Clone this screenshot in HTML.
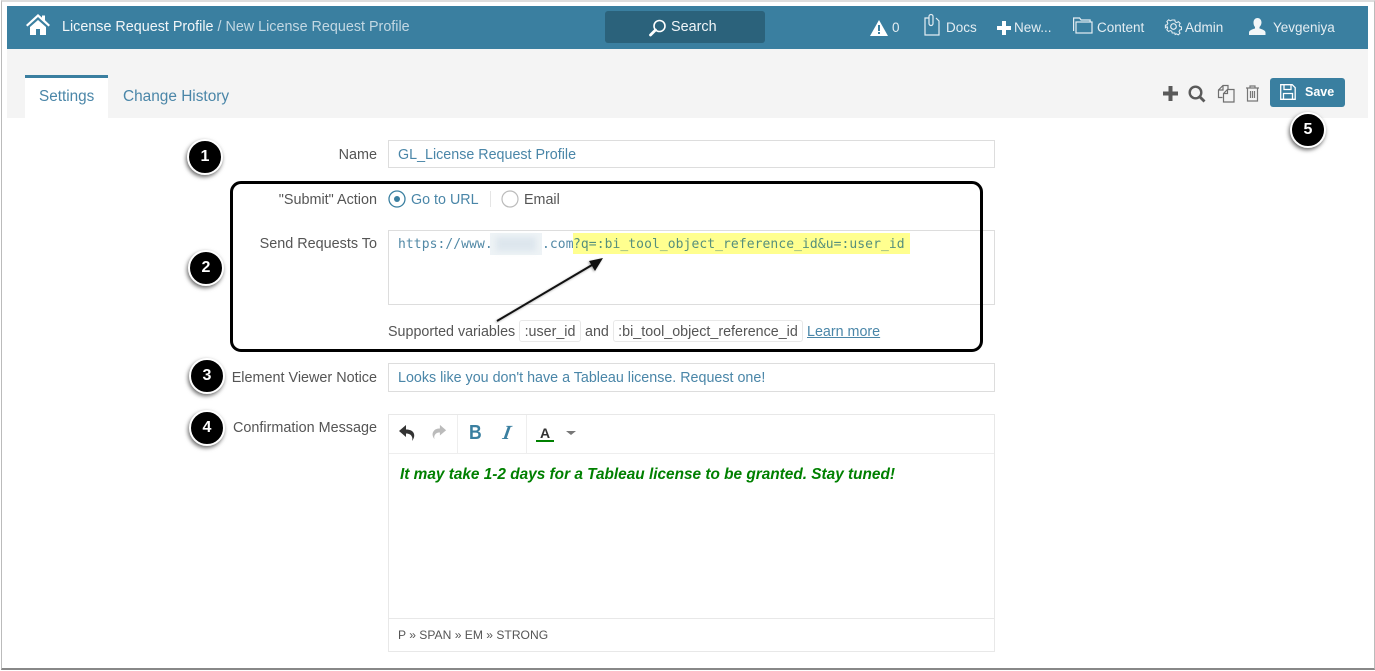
<!DOCTYPE html>
<html><head><meta charset="utf-8"><style>
html,body{margin:0;padding:0;background:#fff}
body{width:1375px;height:671px;position:relative;overflow:hidden;font-family:"Liberation Sans",sans-serif;font-size:14.3px;color:#555}
.a{position:absolute;white-space:nowrap}
.l{position:absolute;right:998px;white-space:nowrap;color:#555;font-size:14.4px;line-height:18px}
.box{position:absolute;left:388px;width:605px;border:1px solid #ddd;background:#fff;box-sizing:content-box}
.t{position:absolute;white-space:nowrap;color:#4a86a8;font-size:14.3px;line-height:18px}
.code{position:absolute;height:22px;line-height:20px;padding-top:1px;border:1px solid #e8e8e8;border-radius:3px;text-align:center;box-sizing:border-box;color:#555;font-size:14.3px;white-space:nowrap}
.c{position:absolute;width:32px;height:32px;border-radius:50%;background:#000;border:2px solid #fff;box-sizing:content-box;box-shadow:-1px 2px 4px rgba(0,0,0,.6);color:#fff;font-weight:bold;font-size:16px;line-height:32px;text-align:center}
.h{position:absolute;white-space:nowrap;font-size:13.5px;color:#e4edf2;line-height:18px;top:19px}
svg{position:absolute;overflow:visible}
</style></head><body>
<div class="a" style="left:1px;top:0;width:1372px;height:666px;border:1px solid #bbb;border-top:2px solid #ddd;border-bottom:2px solid #888;box-sizing:content-box"></div>
<div class="a" style="left:7px;top:6px;width:1361px;height:43px;background:#3a7fa0"></div>
<div class="a" style="left:7px;top:49px;width:1361px;height:69px;background:#f4f4f4"></div>
<svg style="left:26px;top:14px" width="24" height="21" viewBox="0 0 24 21"><path d="M0 11L12 0l4 3.6V1.500h3v4.800L24 11l-1.500 1.500L12 3 1.500 12.500zM4 13l8-7 8 7v8h-6v-6h-4v6H4z" fill="#fff"/></svg>
<div class="a" style="left:62px;top:18px;font-size:14.35px;line-height:18px;color:#f2f6f8">License Request Profile <span style="color:#c3d8e3">/ New License Request Profile</span></div>
<div class="a" style="left:605px;top:11px;width:160px;height:32px;background:#2b627b;border-radius:3px"></div>
<svg style="left:649px;top:19px" width="18" height="18" viewBox="0 0 18 18"><circle cx="10.500" cy="7" r="5.500" fill="none" stroke="#fff" stroke-width="1.600"/><path d="M6.500 11L1.500 16" stroke="#fff" stroke-width="2.800" stroke-linecap="round"/></svg>
<div class="a" style="left:671px;top:18px;font-size:14.4px;line-height:18px;color:#f0f5f8">Search</div>
<svg style="left:870px;top:20px" width="18" height="16" viewBox="0 0 18 16"><path d="M9 0L18 16H0z" fill="#fff"/><rect x="8" y="5" width="2" height="6" fill="#3a7fa0"/><rect x="8" y="12" width="2" height="2" fill="#3a7fa0"/></svg>
<div class="h" style="left:892px">0</div>
<svg style="left:924px;top:15px" width="16" height="21" viewBox="0 0 16 21" fill="none" stroke="#e4edf2" stroke-width="1.200"><path d="M5 3H1v17h14V6l-3-3"/><path d="M5 1.500v7a2 2 0 0 0 4 0V1.500a1.500 1.500 0 0 0-4 0" /></svg>
<div class="h" style="left:946px">Docs</div>
<svg style="left:997px;top:21px" width="14" height="14" viewBox="0 0 14 14"><path d="M5 0h4v5h5v4H9v5H5V9H0V5h5z" fill="#fff"/></svg>
<div class="h" style="left:1014px">New...</div>
<svg style="left:1073px;top:17px" width="20" height="17" viewBox="0 0 20 17" fill="none" stroke="#e4edf2" stroke-width="1.200"><path d="M.6 14V1h6l1.500 2h9v2"/><rect x="3" y="5" width="16" height="11"/></svg>
<div class="h" style="left:1097px">Content</div>
<svg style="left:1165px;top:18px" width="17" height="17" viewBox="0 0 17 17" fill="none" stroke="#e4edf2" stroke-width="1.200"><circle cx="8.500" cy="8.500" r="2.800"/><path d="M7 1h3l.5 2.200 1.700.8 2-1.100 2 2-1.200 2 .7 1.600 2 .5v3l-2 .5-.8 1.700 1.100 1.900-2 2-2-1.100-1.600.7L10 16H7l-.5-2-1.700-.8-2 1.100-2-2 1.100-2-.7-1.600L-.8 10V7l2-.5.8-1.700-1.100-2 2-2 2 1.200 1.600-.8z" transform="translate(1.100 1.100) scale(.87)"/></svg>
<div class="h" style="left:1185px">Admin</div>
<svg style="left:1249px;top:18px" width="17" height="17" viewBox="0 0 17 17"><path d="M8.500 0c2.500 0 4 2 4 4.500 0 2-1 3.500-2 4.500v1.500c2.500.8 6 1.800 6 4V17H0v-2.500c0-2.200 3.500-3.200 6-4V9C5 8 4.500 6.500 4.500 4.500 4.500 2 6 0 8.500 0z" fill="#f2f6f8"/></svg>
<div class="h" style="left:1273px">Yevgeniya</div>

<div class="a" style="left:25px;top:75px;width:83px;height:43px;background:#fff;border-top:3px solid #3a7fa0;box-sizing:border-box"></div>
<div class="a" style="left:39px;top:88px;font-size:15.3px;line-height:18px;color:#4a86a8">Settings</div>
<div class="a" style="left:123px;top:88px;font-size:15.4px;line-height:18px;color:#4a86a8">Change History</div>

<svg style="left:1163px;top:86px" width="15" height="15" viewBox="0 0 15 15"><path d="M5.500 0h4v5.500H15v4H9.500V15h-4V9.500H0v-4h5.500z" fill="#5a5a5a"/></svg>
<svg style="left:1188px;top:85px" width="18" height="18" viewBox="0 0 18 18"><circle cx="7.500" cy="7.500" r="5.800" fill="none" stroke="#5a5a5a" stroke-width="2.400"/><path d="M11.500 11.500L16.500 16.500" stroke="#5a5a5a" stroke-width="2.800"/></svg>
<svg style="left:1217px;top:84px" width="18" height="19" viewBox="0 0 18 19" fill="none" stroke="#6f6f6f" stroke-width="1.200"><path d="M5.500 13.500H1.500V6l4.500-4.500h5V5"/><path d="M1.500 6H6V1.500"/><path d="M10.500 5.500H17V18H6.500V9.500z"/><path d="M6.500 9.500h4v-4"/></svg>
<svg style="left:1245px;top:85px" width="15" height="17" viewBox="0 0 15 17" fill="none" stroke="#777" stroke-width="1.200"><path d="M1 3h13M5 3V1h5v2M2.500 3v13h10V3M5.500 6v7M7.500 6v7M9.500 6v7"/></svg>
<div class="a" style="left:1270px;top:78px;width:75px;height:29px;background:#3a7fa0;border-radius:3px"></div>
<svg style="left:1280px;top:84px" width="16" height="16" viewBox="0 0 16 16" fill="none" stroke="#fff" stroke-width="1.300"><path d="M.7.700h11.500l3 3v11.600H.7z"/><path d="M4 1v4.500h7V1M3.500 15V9.500h9V15"/></svg>
<div class="a" style="left:1305px;top:84px;font-size:12.500px;font-weight:bold;line-height:16px;color:#fff">Save</div>

<div class="l" style="top:146px">Name</div>
<div class="box" style="top:140px;height:26px"></div>
<div class="t" style="left:398px;top:146px">GL_License Request Profile</div>

<div class="l" style="top:191px">"Submit" Action</div>
<svg style="left:388px;top:190px" width="18" height="18" viewBox="0 0 18 18"><circle cx="9" cy="9" r="8" fill="#fff" stroke="#3a7fa0" stroke-width="1.300"/><circle cx="9" cy="9" r="3" fill="#3a7fa0"/></svg>
<div class="t" style="left:411px;top:191px">Go to URL</div>
<div class="a" style="left:490px;top:191px;width:1px;height:16px;background:#e5e5e5"></div>
<svg style="left:501px;top:190px" width="18" height="18" viewBox="0 0 18 18"><circle cx="9" cy="9" r="8" fill="#fff" stroke="#bbb" stroke-width="1.200"/></svg>
<div class="t" style="left:524px;top:191px;color:#555">Email</div>

<div class="l" style="top:235px">Send Requests To</div>
<div class="box" style="top:230px;height:73px"></div>
<div class="a" style="left:573px;top:233px;width:337px;height:21px;background:#ffff8f"></div>
<div class="a" style="left:490px;top:233px;width:52px;height:22px;background:#eef3f6"></div>
<div class="a" style="left:496px;top:237px;width:40px;height:14px;background:#dde6ed;filter:blur(3px)"></div>
<div class="a" style="left:398px;top:236px;font-family:'DejaVu Sans Mono',monospace;font-size:13px;letter-spacing:.07px;line-height:18px;color:#5289a6">https://www.</div>
<div class="a" style="left:542px;top:236px;font-family:'DejaVu Sans Mono',monospace;font-size:13px;letter-spacing:.07px;line-height:18px;color:#5289a6">.com</div>
<div class="a" style="left:573px;top:236px;font-family:'DejaVu Sans Mono',monospace;font-size:13px;letter-spacing:.07px;line-height:18px;color:#568f7c">?q=:bi_tool_object_reference_id&amp;u=:user_id</div>

<div class="a" style="left:388px;top:323px;line-height:18px;color:#555">Supported variables</div>
<div class="code" style="left:519px;top:320px;width:62px">:user_id</div>
<div class="a" style="left:585px;top:323px;line-height:18px;color:#555">and</div>
<div class="code" style="left:613px;top:320px;width:190px">:bi_tool_object_reference_id</div>
<div class="a" style="left:807px;top:323px;line-height:18px;color:#4a86a8;text-decoration:underline">Learn more</div>

<div class="l" style="top:369px">Element Viewer Notice</div>
<div class="box" style="top:363px;height:27px"></div>
<div class="t" style="left:398px;top:369px">Looks like you don't have a Tableau license. Request one!</div>

<div class="l" style="top:419px">Confirmation Message</div>
<div class="box" style="top:414px;height:236px;border-color:#e8e8e8"></div>
<div class="a" style="left:389px;top:453px;width:605px;height:1px;background:#eee"></div>
<div class="a" style="left:457px;top:415px;width:1px;height:38px;background:#eee"></div>
<div class="a" style="left:526px;top:415px;width:1px;height:38px;background:#eee"></div>
<div class="a" style="left:389px;top:618px;width:605px;height:1px;background:#e8e8e8"></div>
<svg style="left:398px;top:424px" width="18" height="18" viewBox="0 0 18 18"><path d="M8 1L1 7l7 6V9.500c3 0 5 1 6 3.500.5 1 .5 2.500 0 4 2.500-3 3-6.500 1-9-1.500-1.800-4-2.500-7-2.500z" fill="#333"/></svg>
<svg style="left:431px;top:424px" width="16" height="16" viewBox="0 0 18 18"><path d="M10 1l7 6-7 6V9.500c-3 0-5 1-6 3.500-.5 1-.5 2.500 0 4-2.500-3-3-6.500-1-9C4.500 5.700 7 5 10 5z" fill="#bbb"/></svg>
<div class="a" style="left:469px;top:422px;font-size:20px;font-weight:bold;line-height:22px;color:#3a7fa0;transform:scaleX(.88);transform-origin:0 0">B</div>
<div class="a" style="left:503px;top:422px;font-size:20px;font-weight:bold;font-style:italic;line-height:22px;color:#3a7fa0;font-family:'Liberation Serif',serif;transform:skewX(-10deg)">I</div>
<div class="a" style="left:540px;top:426px;font-size:14px;font-weight:bold;line-height:14px;color:#333">A</div>
<div class="a" style="left:536px;top:440px;width:18px;height:2px;background:#008000"></div>
<div class="a" style="left:566px;top:431px;width:0;height:0;border:5px solid transparent;border-top:4px solid #777;border-bottom:0"></div>
<div class="a" style="left:400px;top:466px;font-size:15.39px;font-weight:bold;font-style:italic;line-height:18px;color:#008000">It may take 1-2 days for a Tableau license to be granted. Stay tuned!</div>
<div class="a" style="left:398px;top:628px;font-size:12.1px;line-height:15px;color:#555">P » SPAN » EM » STRONG</div>

<div class="a" style="left:230px;top:181px;width:753px;height:171px;border:3px solid #000;border-radius:11px;box-sizing:border-box"></div>
<svg style="left:0;top:0;filter:drop-shadow(-1px 1px 1px rgba(0,0,0,.35))" width="1375" height="671"><path d="M497 321L592 265" stroke="#111" stroke-width="2"/><path d="M603 258L589 261 595 271z" fill="#111"/></svg>

<div class="c" style="left:187px;top:139px">1</div>
<div class="c" style="left:188px;top:250px">2</div>
<div class="c" style="left:189px;top:358px">3</div>
<div class="c" style="left:189px;top:410px">4</div>
<div class="c" style="left:1290px;top:112px">5</div>
</body></html>
